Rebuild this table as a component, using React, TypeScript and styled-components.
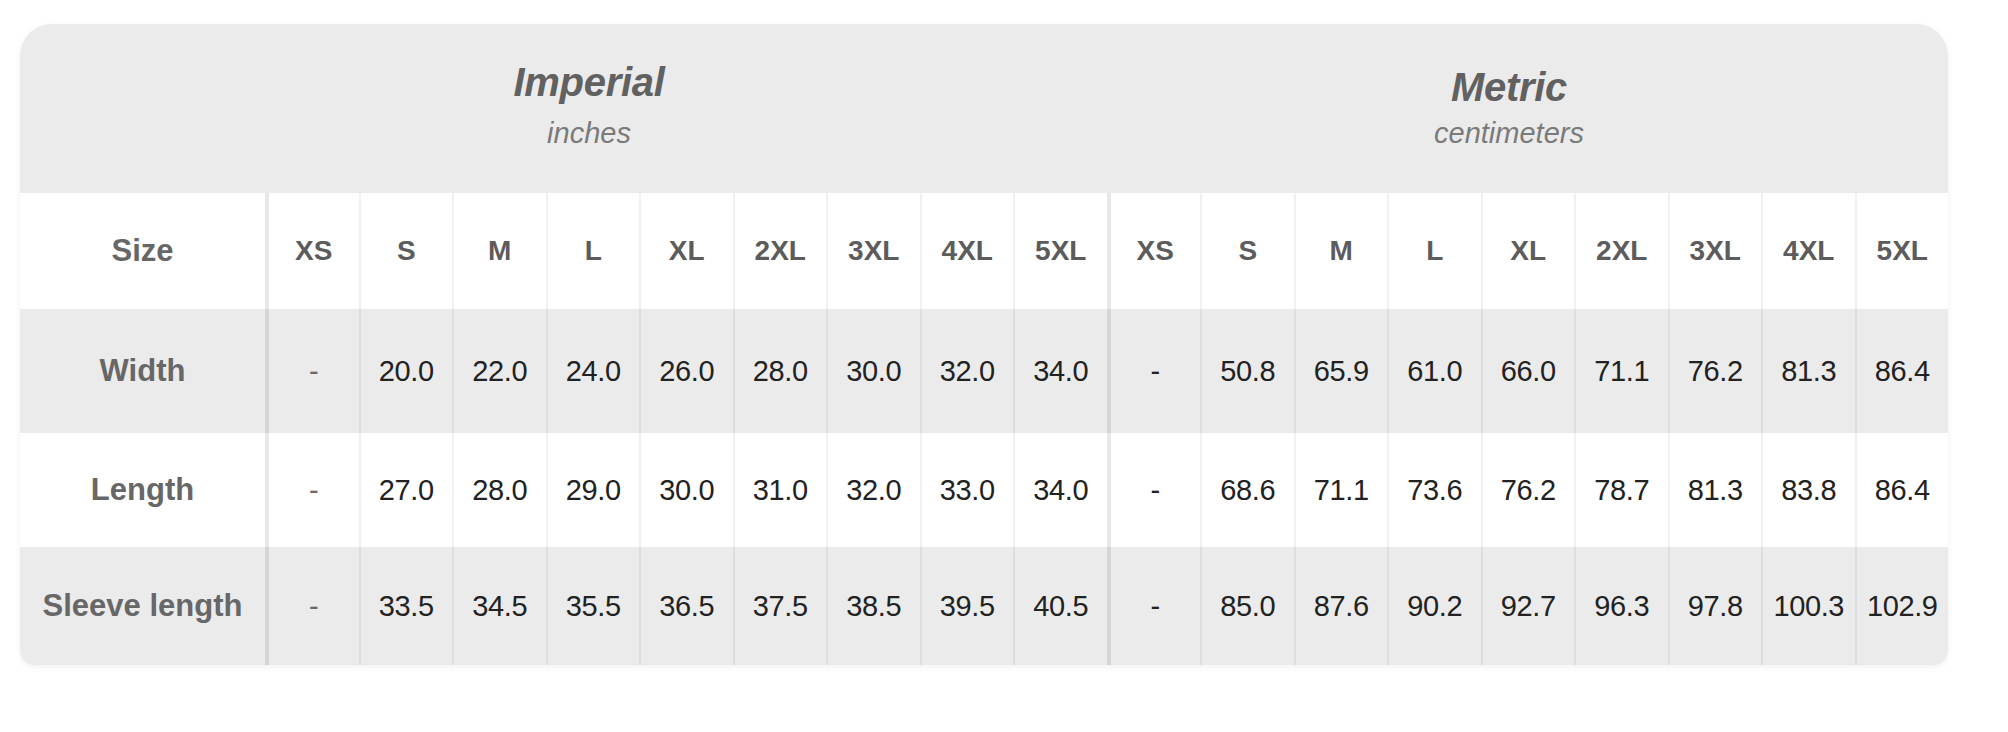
import React from "react"
import styled, {createGlobalStyle} from "styled-components"

const sizes = ["XS", "S", "M", "L", "XL", "2XL", "3XL", "4XL", "5XL"]

type Measure = {
    label: string
    height: number
    shaded: boolean
    imperial: string[]
    metric: string[]
}

const measures: Measure[] = [
    {
        label: "Width",
        height: 124,
        shaded: true,
        imperial: ["-", "20.0", "22.0", "24.0", "26.0", "28.0", "30.0", "32.0", "34.0"],
        metric: ["-", "50.8", "65.9", "61.0", "66.0", "71.1", "76.2", "81.3", "86.4"]
    },
    {
        label: "Length",
        height: 114,
        shaded: false,
        imperial: ["-", "27.0", "28.0", "29.0", "30.0", "31.0", "32.0", "33.0", "34.0"],
        metric: ["-", "68.6", "71.1", "73.6", "76.2", "78.7", "81.3", "83.8", "86.4"]
    },
    {
        label: "Sleeve length",
        height: 118,
        shaded: true,
        imperial: ["-", "33.5", "34.5", "35.5", "36.5", "37.5", "38.5", "39.5", "40.5"],
        metric: ["-", "85.0", "87.6", "90.2", "92.7", "96.3", "97.8", "100.3", "102.9"]
    }
]

const GlobalStyle = createGlobalStyle`
    body {
        margin: 0;
        background: #ffffff;
        font-family: "Liberation Sans", Arial, sans-serif;
    }
`

export default function App() {
    return (
        <Page>
            <GlobalStyle/>
            <Card>
                <Header>
                    <UnitGroup>
                        <UnitTitle $drop={0}>Imperial</UnitTitle>
                        <UnitSub $lift={0}>inches</UnitSub>
                    </UnitGroup>
                    <UnitGroup>
                        <UnitTitle $drop={5}>Metric</UnitTitle>
                        <UnitSub $lift={5}>centimeters</UnitSub>
                    </UnitGroup>
                </Header>

                <Row $shaded={false} $height={116}>
                    <RowLabel>Size</RowLabel>
                    {[...sizes, ...sizes].map((s, i) => (
                        <SizeCell key={i} $divider={i % 9 === 0 ? "thick" : "thin"}>{s}</SizeCell>
                    ))}
                </Row>

                {measures.map(m => (
                    <Row key={m.label} $shaded={m.shaded} $height={m.height}>
                        <RowLabel>{m.label}</RowLabel>
                        {[...m.imperial, ...m.metric].map((v, i) => (
                            <ValueCell key={i}
                                       $divider={i % 9 === 0 ? "thick" : "thin"}
                                       $muted={v === "-" && i < 9}>
                                {v}
                            </ValueCell>
                        ))}
                    </Row>
                ))}
            </Card>
        </Page>
    )
}

const Page = styled.div`
    width: 2008px;
    height: 732px;
    padding: 24px 60px 0 20px;
    box-sizing: border-box;
`

const Card = styled.div`
    width: 1928px;
    border-radius: 32px 32px 14px 14px;
    overflow: hidden;
    box-shadow: 0 2px 6px rgba(0, 0, 0, 0.06);
`

const Header = styled.div`
    display: grid;
    grid-template-columns: 1138px 702px 1fr;
    height: 169px;
    background: #ebebeb;
`

const UnitGroup = styled.div`
    display: flex;
    flex-direction: column;
    align-items: center;
    padding-top: 36px;
`

const UnitTitle = styled.div<{ $drop: number }>`
    font-size: 40px;
    line-height: 44px;
    font-weight: bold;
    font-style: italic;
    color: #616161;
    letter-spacing: -0.3px;
    margin-top: ${p => p.$drop}px;
`

const UnitSub = styled.div<{ $lift: number }>`
    font-size: 29px;
    line-height: 34px;
    font-style: italic;
    color: #7a7a7a;
    margin-top: ${p => 12 - p.$lift}px;
`

const Row = styled.div<{ $shaded: boolean; $height: number }>`
    display: grid;
    grid-template-columns: 245px repeat(18, 1fr);
    height: ${p => p.$height}px;
    background: ${p => p.$shaded ? "#ebebeb" : "#ffffff"};
`

const RowLabel = styled.div`
    display: flex;
    align-items: center;
    justify-content: center;
    font-size: 31px;
    font-weight: bold;
    color: #676767;
    white-space: nowrap;
`

const Cell = styled.div<{ $divider: "thick" | "thin" }>`
    display: flex;
    align-items: center;
    justify-content: center;
    box-sizing: border-box;
    white-space: nowrap;
    border-left: ${p => p.$divider === "thick"
            ? "4px solid rgba(0, 0, 0, 0.09)"
            : "2px solid rgba(0, 0, 0, 0.055)"};
`

const SizeCell = styled(Cell)`
    font-size: 28px;
    font-weight: bold;
    color: #5c5c5c;
`

const ValueCell = styled(Cell)<{ $muted: boolean }>`
    font-size: 29px;
    color: ${p => p.$muted ? "#6a6a6a" : "#222222"};
    letter-spacing: -0.4px;
`
